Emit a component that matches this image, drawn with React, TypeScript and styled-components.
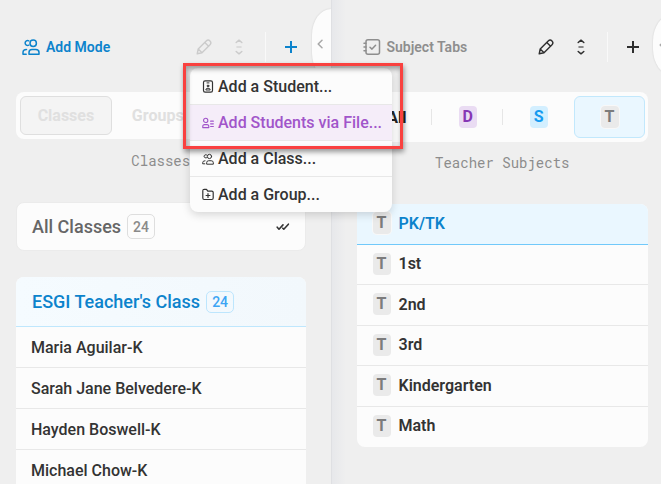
import React from "react";
import styled, { createGlobalStyle, css } from "styled-components";

const GlobalStyle = createGlobalStyle`
  *, *::before, *::after { box-sizing: border-box; }
  body {
    margin: 0;
    background: #efefef;
    font-family: Roboto, "Liberation Sans", sans-serif;
    color: #333;
    overflow: hidden;
  }
  button { font: inherit; color: inherit; border: 0; background: none; padding: 0; margin: 0; cursor: pointer; }
  ul { list-style: none; margin: 0; padding: 0; }
  h2, h3, p { margin: 0; }
  svg { display: block; flex: none; }
`;

const Page = styled.main`
  position: relative;
  display: grid;
  grid-template-columns: 1fr 1fr;
  height: 100vh;
  overflow: hidden;
`;

const Panel = styled.section<{ $side: "left" | "right" }>`
  position: relative;
  min-width: 0;
  ${({ $side }) =>
    $side === "left"
      ? css`
          padding: 0 25px 0 16px;
        `
      : css`
          padding: 0 13px 0 25px;
          border-left: 1px solid #dfe0e3;
          background: linear-gradient(to right, #e7e8eb 0, #efefef 14px);
        `}
`;

const Header = styled.header`
  display: flex;
  align-items: center;
  height: 92px;
  padding: 2px 0 0 6px;
`;

const Title = styled.h2<{ $active?: boolean }>`
  display: flex;
  align-items: center;
  gap: 6px;
  margin-right: auto;
  font-size: 14px;
  line-height: 20px;
  font-weight: 600;
  white-space: nowrap;
  color: ${({ $active }) => ($active ? "#0c83cc" : "#8e8e8e")};
`;

const Tools = styled.div`
  display: flex;
  align-items: center;
  gap: 5px;
`;

const ToolButton = styled.button<{ $tone?: "muted" | "accent" }>`
  display: grid;
  place-items: center;
  width: 30px;
  height: 30px;
  color: ${({ $tone }) => ($tone === "muted" ? "#cbcbcb" : $tone === "accent" ? "#0c83cc" : "#2e2e2e")};
`;

const ToolDivider = styled.span`
  width: 1px;
  height: 30px;
  margin: 0 5px 0 6px;
  background: #f9f9f9;
`;

const CollapseTab = styled.button<{ $side: "left" | "right" }>`
  position: absolute;
  right: ${({ $side }) => ($side === "left" ? "0" : "-11px")};
  top: ${({ $side }) => ($side === "left" ? "9px" : "15px")};
  width: 19px;
  height: ${({ $side }) => ($side === "left" ? "70px" : "60px")};
  padding-right: 2px;
  display: grid;
  place-items: center;
  background: #fcfcfc;
  color: #a8a8a8;
  border-radius: 19px 0 0 19px / 26px 0 0 26px;
  box-shadow: 0 0 2px rgba(0, 0, 0, 0.14);
`;

const Segments = styled.div<{ $columns: number; $tall?: boolean }>`
  display: grid;
  grid-template-columns: repeat(${({ $columns }) => $columns}, 1fr);
  padding: ${({ $tall }) => ($tall ? "4px 3px 4px 5px" : "4px 10px 4px 4px")};
  height: ${({ $tall }) => ($tall ? 50 : 47)}px;
  border-radius: 8px;
  background: #fcfcfc;
`;

const ModeButton = styled.button<{ $selected?: boolean }>`
  border-radius: 6px;
  font-size: 16px;
  font-weight: 700;
  color: #e0e0e0;
  ${({ $selected }) =>
    $selected &&
    css`
      border: 1px solid #dfdfdf;
      background: #f4f4f4;
    `}
`;

const SubjectButton = styled.button<{ $selected?: boolean; $divided?: boolean }>`
  position: relative;
  display: grid;
  place-items: center;
  border-radius: 6px;
  font-size: 16px;
  font-weight: 700;
  color: #222;
  ${({ $selected }) =>
    $selected &&
    css`
      border: 1px solid #c2e8fc;
      background: #eaf7ff;
    `}
  ${({ $divided }) =>
    $divided &&
    css`
      &::after {
        content: "";
        position: absolute;
        right: 0;
        width: 1px;
        height: 16px;
        background: #e6e6e6;
      }
    `}
`;

const badgeTones = {
  purple: css`background: #eadcf3; color: #8637b5;`,
  blue: css`background: #d3efff; color: #159bf0;`,
  grey: css`background: #eaeaea; color: #7c7c7c;`,
};

const Badge = styled.span<{ $tone: keyof typeof badgeTones; $ring?: boolean }>`
  display: grid;
  place-items: center;
  width: 18px;
  height: 22px;
  border-radius: 4px;
  font-size: 16px;
  line-height: 22px;
  font-weight: 700;
  ${({ $tone }) => badgeTones[$tone]}
  ${({ $ring }) => $ring && css`box-shadow: 0 0 0 1px #f8f8f8;`}
`;

const Caption = styled.p<{ $tall?: boolean }>`
  height: ${({ $tall }) => ($tall ? 62 : 64)}px;
  padding-top: ${({ $tall }) => ($tall ? 11 : 12)}px;
  font-family: "Roboto Mono", "DejaVu Sans Mono", monospace;
  font-size: 14px;
  line-height: 20px;
  text-align: center;
  color: #8c8c8c;
`;

const AllClasses = styled.button`
  display: flex;
  align-items: center;
  width: 100%;
  height: 49px;
  padding: 0 15px;
  border: 1px solid #ebebeb;
  border-radius: 8px;
  margin-top: -1px;
  background: #fcfcfc;
  color: #666;
  font-size: 18px;
  font-weight: 500;
  gap: 6px;

  svg { margin-left: auto; color: #333; }
`;

const Count = styled.span<{ $active?: boolean }>`
  display: grid;
  place-items: center;
  width: 28px;
  height: ${({ $active }) => ($active ? 22 : 25)}px;
  border: 1px solid ${({ $active }) => ($active ? "#bde6fd" : "#dedede")};
  border-radius: 5px;
  font-size: 14px;
  line-height: 20px;
  font-weight: 500;
  color: ${({ $active }) => ($active ? "#3da5f4" : "#8a8a8a")};
`;

const ClassCard = styled.section`
  margin-top: 26px;
  border-radius: 8px;
  background: #fcfcfc;
  overflow: hidden;
`;

const ClassHeading = styled.h3`
  display: flex;
  align-items: center;
  gap: 6px;
  height: 50px;
  padding: 0 16px;
  border-bottom: 1px solid #bfe7fd;
  background: linear-gradient(to right, #f5fbff, #f2f8fc);
  color: #0c83cc;
  font-size: 18px;
  font-weight: 500;
`;

const StudentRow = styled.li`
  height: 41px;
  padding-left: 15px;
  border-bottom: 1px solid #e8e8e8;
  font-size: 16px;
  line-height: 41px;
  font-weight: 500;
`;

const TabList = styled.ul`
  display: grid;
  grid-auto-rows: 1fr;
  height: 243px;
  border-radius: 8px;
  overflow: hidden;
  background: #fcfcfc;
`;

const TabItem = styled.li<{ $selected?: boolean }>`
  display: flex;
  border-bottom: 1px solid ${({ $selected }) => ($selected ? "#71c9fa" : "#e8e8e8")};
  background: ${({ $selected }) => ($selected ? "#eaf7ff" : "transparent")};
  color: ${({ $selected }) => ($selected ? "#0c83cc" : "#333")};
  &:last-child { border-bottom-color: transparent; }
`;

const TabButton = styled.button`
  display: flex;
  flex: 1;
  align-items: center;
  gap: 8px;
  padding: 0 0 1px 16px;
  font-size: 16px;
  font-weight: 600;
`;

const Menu = styled.ul`
  position: absolute;
  top: 68px;
  left: 190px;
  width: 202px;
  z-index: 2;
  border-radius: 8px;
  overflow: hidden;
  background: #fcfcfc;
  box-shadow: 0 3px 8px rgba(0, 0, 0, 0.15);
`;

const MenuItem = styled.button<{ $active?: boolean }>`
  display: flex;
  align-items: center;
  gap: 4px;
  width: 100%;
  height: 36px;
  padding: 0 12px;
  border-top: 1px solid #e8e8e8;
  background: ${({ $active }) => ($active ? "#f5edf9" : "transparent")};
  color: ${({ $active }) => ($active ? "#a155ca" : "#333")};
  font-size: 16px;
  font-weight: 500;
  white-space: nowrap;
  li:first-child > & { border-top-color: transparent; }
`;

const Highlight = styled.div`
  position: absolute;
  z-index: 3;
  top: 63px;
  left: 183px;
  width: 220px;
  height: 86px;
  border: 3px solid #f9413f;
  box-shadow: 1px 3px 5px rgba(0, 0, 0, 0.4), inset 1px 3px 5px rgba(0, 0, 0, 0.35);
  pointer-events: none;
`;

type IconProps = { size: number; viewBox: string; width?: number; children: React.ReactNode };
const Icon = ({ size, width, viewBox, children }: IconProps) => (
  <svg width={width ?? size} height={size} viewBox={viewBox} fill="none" stroke="currentColor" strokeWidth="1.5" strokeLinecap="round" strokeLinejoin="round" aria-hidden="true">
    {children}
  </svg>
);

const PeopleIcon = ({ size = 18 }: { size?: number }) => (
  <Icon size={size} viewBox="0 0 18 18">
    <circle cx="11.2" cy="5.2" r="3.2" />
    <path d="M6.8 2.8A2.5 2.5 0 1 0 6.8 7.2" />
    <path d="M7 16.2V14.6Q7 11.6 10 11.6H13.8Q17 11.6 17 14.6V16.2Z" />
    <path d="M4.5 11.6Q1 11.6 1 14.6V16.2H4.2" />
  </Icon>
);

const SubjectIcon = () => (
  <Icon size={18} viewBox="0 0 18 18">
    <rect x="3" y="1.7" width="13.5" height="14.6" rx="2" />
    <path d="M7 9.2 9 11.1 12.6 7.2M1 5.2H3M1 9H3M1 12.8H3" />
  </Icon>
);

const PencilIcon = () => (
  <Icon size={16} viewBox="0 0 16 16">
    <path d="M1.2 14.8 2.2 10 10.2 2Q12.2.2 14 2 15.8 3.8 14 5.8L6 13.8ZM8.8 3.4 12.6 7.2M2.2 10 6 13.8" strokeWidth="1.4" />
  </Icon>
);

const SortIcon = () => (
  <Icon size={16} width={10} viewBox="0 0 10 16">
    <path d="M2.2 3.5 5 1.2 7.8 3.5M2.2 12.5 5 14.8 7.8 12.5" />
    <path d="M3 8H7" opacity=".7" />
  </Icon>
);

const PlusIcon = () => (
  <Icon size={12} viewBox="0 0 12 12">
    <path d="M6 0V12M0 6H12" strokeWidth="2" strokeLinecap="butt" />
  </Icon>
);

const ChevronIcon = () => (
  <Icon size={10} width={6} viewBox="0 0 6 10">
    <path d="M5 1.2 1.2 5 5 8.8" />
  </Icon>
);

const DoubleCheckIcon = () => (
  <Icon size={8} width={14} viewBox="0 0 14 8">
    <path d="M1.2 4.2 3 6.2 7 1.9M6.8 5.2 7.8 6.2 12.4 1.2" strokeWidth="1.6" />
  </Icon>
);

const StudentIcon = () => (
  <Icon size={13} width={12} viewBox="0 0 12 13">
    <rect x="1.5" y=".8" width="9" height="11.4" rx="1.6" strokeWidth="1.2" />
    <path d="M5 2.9H7M3.8 9.6Q3.8 8.2 6 8.2T8.2 9.6Z" strokeWidth="1" />
    <circle cx="6" cy="5.9" r="1" fill="currentColor" strokeWidth=".6" />
  </Icon>
);

const StudentFileIcon = () => (
  <Icon size={12} width={12} viewBox="0 0 13 12">
    <circle cx="4" cy="3.2" r="2.3" strokeWidth="1.2" />
    <path d="M.8 11V10Q.8 7.8 2.8 7.8H5.4Q7.4 7.8 7.4 10V11ZM9.3 4H12.3M9.3 6.9H12.3M9.3 9.8H12.3" strokeWidth="1.2" />
  </Icon>
);

const FolderIcon = () => (
  <Icon size={13} width={12} viewBox="0 0 12 13">
    <path d="M.8 2.8Q.8 1.3 2.2 1.3H4.5L5.8 3.2H9.8Q11.2 3.2 11.2 4.6V10Q11.2 11.5 9.8 11.5H2.2Q.8 11.5.8 10ZM6 5.6V9.4M4.1 7.5H7.9" strokeWidth="1.2" />
  </Icon>
);

const menuItems = [
  { label: "Add a Student...", icon: <StudentIcon /> },
  { label: "Add Students via File...", icon: <StudentFileIcon />, active: true },
  { label: "Add a Class...", icon: <PeopleIcon size={12} /> },
  { label: "Add a Group...", icon: <FolderIcon /> },
];
const students = ["Maria Aguilar-K", "Sarah Jane Belvedere-K", "Hayden Boswell-K", "Michael Chow-K"];
const tabs = ["PK/TK", "1st", "2nd", "3rd", "Kindergarten", "Math"];

const Toolbar = ({ muted }: { muted?: boolean }) => (
  <Tools>
    <ToolButton $tone={muted ? "muted" : undefined} aria-label="Edit"><PencilIcon /></ToolButton>
    <ToolButton $tone={muted ? "muted" : undefined} aria-label="Sort"><SortIcon /></ToolButton>
    <ToolDivider />
    <ToolButton $tone={muted ? "accent" : undefined} aria-label="Add"><PlusIcon /></ToolButton>
  </Tools>
);

export default function App() {
  return (
    <>
      <GlobalStyle />
      <Page>
        <Panel $side="left">
          <Header>
            <Title $active><PeopleIcon />Add Mode</Title>
            <Toolbar muted />
          </Header>
          <CollapseTab $side="left" aria-label="Collapse classes"><ChevronIcon /></CollapseTab>
          <Segments $columns={3}>
            <ModeButton $selected>Classes</ModeButton>
            <ModeButton>Groups</ModeButton>
          </Segments>
          <Caption>Classes</Caption>
          <AllClasses>All Classes <Count>24</Count><DoubleCheckIcon /></AllClasses>
          <ClassCard>
            <ClassHeading>ESGI Teacher's Class <Count $active>24</Count></ClassHeading>
            <ul>{students.map((name) => <StudentRow key={name}>{name}</StudentRow>)}</ul>
          </ClassCard>
        </Panel>

        <Panel $side="right">
          <Header>
            <Title><SubjectIcon />Subject Tabs</Title>
            <Toolbar />
          </Header>
          <CollapseTab $side="right" aria-label="Collapse subjects"><ChevronIcon /></CollapseTab>
          <Segments $columns={4} $tall>
            <SubjectButton $divided>All</SubjectButton>
            <SubjectButton $divided><Badge $tone="purple">D</Badge></SubjectButton>
            <SubjectButton><Badge $tone="blue">S</Badge></SubjectButton>
            <SubjectButton $selected><Badge $tone="grey" $ring>T</Badge></SubjectButton>
          </Segments>
          <Caption $tall>Teacher Subjects</Caption>
          <TabList>
            {tabs.map((name, i) => (
              <TabItem key={name} $selected={i === 0}>
                <TabButton><Badge $tone="grey" $ring={i === 0}>T</Badge>{name}</TabButton>
              </TabItem>
            ))}
          </TabList>
        </Panel>

        <Menu>
          {menuItems.map(({ label, icon, active }) => (
            <li key={label}><MenuItem $active={active}>{icon}{label}</MenuItem></li>
          ))}
        </Menu>
        <Highlight />
      </Page>
    </>
  );
}
